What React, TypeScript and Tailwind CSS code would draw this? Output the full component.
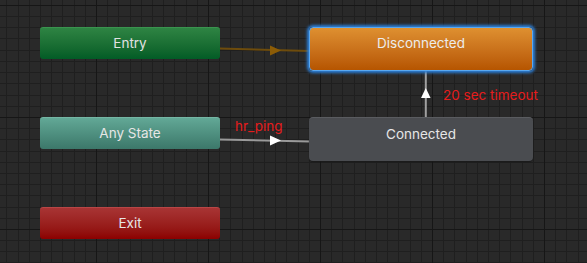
import React from "react";

const W = 587;
const H = 263;

function Grid() {
  const vx: { x: number; thick: boolean }[] = [];
  for (let k = 0; k < 60; k++) {
    const x = 6.4 + 11.2 * k;
    if (x > W) break;
    vx.push({ x: Math.round(x), thick: (k - 8) % 10 === 0 });
  }
  const hy: { y: number; thick: boolean }[] = [];
  for (let k = 0; k < 30; k++) {
    const y = 5.4 + 11.2 * k;
    if (y > H) break;
    hy.push({ y: Math.floor(y), thick: k % 10 === 0 });
  }
  return (
    <svg className="absolute inset-0" width={W} height={H} shapeRendering="crispEdges">
      {vx.filter((v) => !v.thick).map((v) => (
        <rect key={"v" + v.x} x={v.x} y={0} width={1} height={H} fill="#1f1f1f" />
      ))}
      {hy.filter((v) => !v.thick).map((v) => (
        <rect key={"h" + v.y} x={0} y={v.y} width={W} height={1} fill="#1f1f1f" />
      ))}
      {vx.filter((v) => v.thick).map((v) => (
        <rect key={"V" + v.x} x={v.x} y={0} width={1} height={H} fill="#161616" />
      ))}
      {hy.filter((v) => v.thick).map((v) => (
        <rect key={"H" + v.y} x={0} y={v.y} width={W} height={1} fill="#161616" />
      ))}
    </svg>
  );
}

function Arrows() {
  return (
    <svg className="absolute inset-0" width={W} height={H}>
      <line x1={219} y1={48.5} x2={310} y2={51} stroke="#6e4c0c" strokeWidth={2} />
      <polygon points="270,45.5 281,50.5 270,55.5" fill="#8c5c06" />
      <line x1={219} y1={139.5} x2={310} y2={141.5} stroke="#9a9a9a" strokeWidth={2} />
      <polygon points="270,135.5 281,140.5 270,145.5" fill="#ffffff" />
      <line x1={425.8} y1={70} x2={425.8} y2={118} stroke="#a0a0a0" strokeWidth={2} />
      <polygon points="421,98 425.8,88 430.6,98" fill="#ffffff" />
    </svg>
  );
}

const font = { fontFamily: "Inter, 'Noto Sans', sans-serif" };

export default function App() {
  return (
    <div className="relative w-[587px] h-[263px] overflow-hidden bg-[#292929]" style={font}>
      <Grid />
      <Arrows />

      <div className="absolute left-[40px] top-[27px] w-[180px] h-[32px] rounded-[3px] bg-gradient-to-b from-[#2e8443] to-[#025c26] border-t border-[#3a944f] flex items-center justify-center text-[13.5px] text-[#e2e2e2]">
        Entry
      </div>

      <div className="absolute left-[309px] top-[27px] w-[224px] h-[44px] rounded-[4px] bg-gradient-to-b from-[#de9030] to-[#b65500] border border-[#5aa8f0] shadow-[0_0_3px_2px_#2c7fd8] flex items-center justify-center pb-[11px] text-[13.5px] text-[#ececec]">
        Disconnected
      </div>

      <div className="absolute left-[40px] top-[117px] w-[180px] h-[32px] rounded-[3px] bg-gradient-to-b from-[#62a896] to-[#3c786a] border-t border-[#74b6a4] flex items-center justify-center text-[13.5px] text-[#e6e6e6]">
        Any State
      </div>

      <div className="absolute left-[309px] top-[117px] w-[224px] h-[44px] rounded-[4px] bg-[#4a4c50] border-t border-[#5a5c60] shadow-[0_1px_1px_#1a1a1a] flex items-center justify-center pb-[11px] text-[13.5px] text-[#e6e6e6]">
        Connected
      </div>

      <div className="absolute left-[40px] top-[207px] w-[180px] h-[32px] rounded-[3px] bg-gradient-to-b from-[#a83434] to-[#8c0000] border-t border-[#b84646] flex items-center justify-center text-[13.5px] text-[#e6e6e6]">
        Exit
      </div>

      <div className="absolute left-[235px] top-[118px] text-[13.5px] leading-[16px] text-[#e61c1c]">hr_ping</div>
      <div className="absolute left-[443px] top-[87px] text-[13.5px] leading-[16px] text-[#e61c1c]">20 sec timeout</div>
    </div>
  );
}
